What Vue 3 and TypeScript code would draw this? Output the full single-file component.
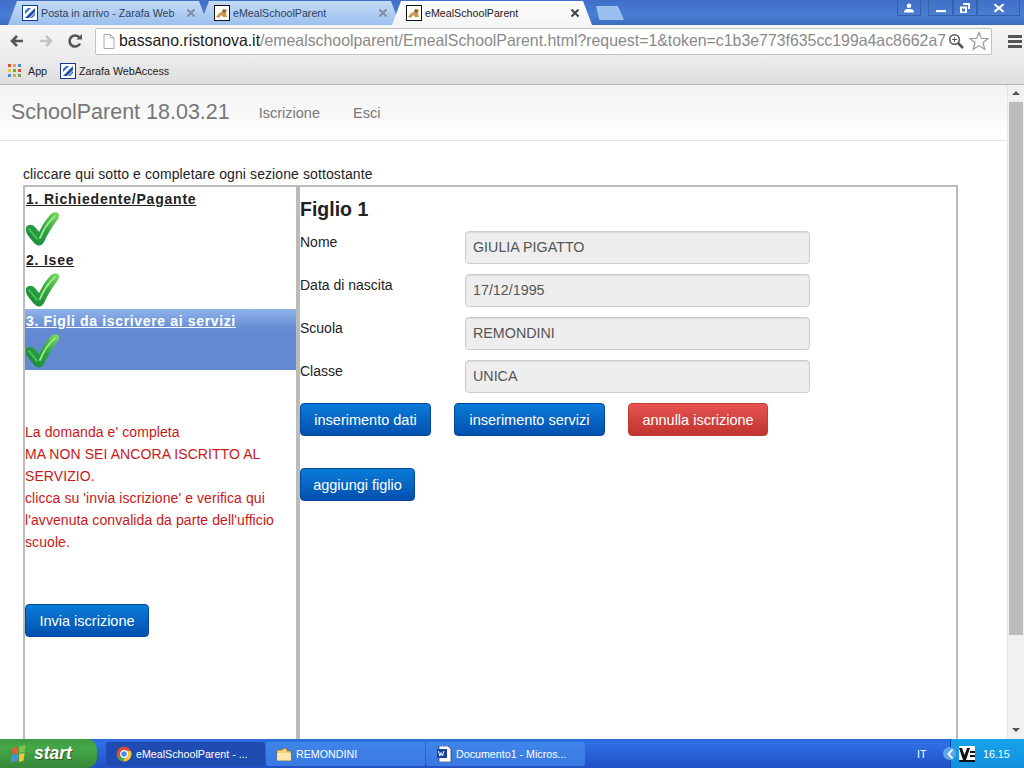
<template>
  <div class="screen">
    <!-- browser chrome -->
    <div class="tabbar">
      <div v-for="tab in tabs" :key="tab.title + tab.icon + tab.active" class="tab" :class="{ active: tab.active }">
        <svg v-if="tab.icon === 'zarafa'" class="fav" viewBox="0 0 16 16"><rect x=".5" y=".5" width="15" height="15" fill="#fff" stroke="#123a8c" /><path d="M3 13 13 3v4L7 13z" fill="#1c4fb0" /><path d="M3 6l3-3h3L3 9zM13 10l-3 3H8l5-5z" fill="#2f6bd0" /></svg>
        <svg v-else class="fav" viewBox="0 0 16 16"><rect x=".5" y=".5" width="15" height="15" fill="#fff" stroke="#111" /><path d="M2 12l3-4 3-1 2-3 3 1-1 3 1 4H9L7 10l-2 3z" fill="#c9994f" /><path d="M9 4l3 1-1 3-3-1z" fill="#8d6a2c" /></svg>
        <span class="tab-title">{{ tab.title }}</span>
        <svg class="tab-x" viewBox="0 0 10 10"><path d="M1.500 1.500l7 7M8.500 1.500l-7 7" /></svg>
      </div>
      <div class="newtab"></div>
      <div class="win-btns">
        <div class="win-btn user"><svg viewBox="0 0 12 10"><circle cx="6" cy="2.800" r="2.300" fill="#fff" /><path d="M1 9.500c0-3 2-3.500 5-3.500s5 .5 5 3.500z" fill="#fff" /></svg></div>
        <div class="win-group">
          <div class="win-btn"><svg viewBox="0 0 12 10"><path d="M1 7h10v2.200H1z" fill="#fff" /></svg></div>
          <div class="win-btn"><svg class="restore" viewBox="0 0 12 12"><path d="M4 1h7v6H9V3H4z M1 4.500h7v6.500H1z M3 6.500v3h3v-3z" fill="#fff" fill-rule="evenodd" /></svg></div>
          <div class="win-btn close"><svg viewBox="0 0 12 10"><path d="M2 .5l4 3 4-3 1.300 1.200L7.800 5l3.500 3.300L10 9.500l-4-3-4 3L.7 8.300 4.200 5 .7 1.700z" fill="#fff" /></svg></div>
        </div>
      </div>
    </div>

    <div class="toolbar">
      <svg class="nav-ic" viewBox="0 0 16 16"><path d="M14 8H4M8 3 3 8l5 5" fill="none" stroke="#555" stroke-width="2.600" /></svg>
      <svg class="nav-ic" viewBox="0 0 16 16"><path d="M2 8h10M8 3l5 5-5 5" fill="none" stroke="#c4c4c4" stroke-width="2.600" /></svg>
      <svg class="nav-ic" viewBox="0 0 16 16"><path d="M13 10.500A5.500 5.500 0 1 1 12.200 4.400" fill="none" stroke="#555" stroke-width="2.600" /><path d="M9.500 6.500H15V1z" fill="#555" /></svg>
      <div class="omnibox">
        <svg class="page-ic" viewBox="0 0 12 15"><path d="M1 .5h6.500l3.500 3.500v10.500H1zM7.500 .5V4H11" fill="#fff" stroke="#aaa" /></svg>
        <span class="url"><span class="host">bassano.ristonova.it</span>/emealschoolparent/EmealSchoolParent.html?request=1&amp;token=c1b3e773f635cc199a4ac8662a7</span>
        <svg class="zoom-ic" viewBox="0 0 16 16"><circle cx="6.500" cy="6.500" r="4.800" fill="none" stroke="#555" stroke-width="1.500" /><path d="M10 10l5 5" stroke="#555" stroke-width="2.500" /><path d="M4 6.500h5M6.500 4v5" stroke="#555" /></svg>
        <svg class="star-ic" viewBox="0 0 20 20"><path d="M10 1.500l2.500 6h6.500l-5 4.200 1.800 6.600-5.800-3.700-5.800 3.700L6 11.700 1 7.500h6.500z" fill="#fff" stroke="#9a9a9a" stroke-width="1.200" /></svg>
      </div>
      <div class="menu-ic"><i></i><i></i><i></i></div>
    </div>

    <div class="bookmarks">
      <div class="apps-ic"><i v-for="c in appColors" :key="c.id" :style="{ background: c.color }"></i></div>
      <span class="bm-label">App</span>
      <svg class="fav bm-fav" viewBox="0 0 16 16"><rect x=".5" y=".5" width="15" height="15" fill="#fff" stroke="#123a8c" /><path d="M3 13 13 3v4L7 13z" fill="#1c4fb0" /><path d="M3 6l3-3h3L3 9zM13 10l-3 3H8l5-5z" fill="#2f6bd0" /></svg>
      <span class="bm-label">Zarafa WebAccess</span>
    </div>

    <!-- page -->
    <div class="viewport">
      <div class="page">
        <nav class="navbar">
          <span class="brand">SchoolParent 18.03.21</span>
          <a class="nav-link first">Iscrizione</a>
          <a class="nav-link">Esci</a>
        </nav>
        <p class="intro">cliccare qui sotto e completare ogni sezione sottostante</p>
        <div class="panel">
          <aside class="steps">
            <div v-for="step in steps" :key="step.title" class="step" :class="{ current: step.current }">
              <span class="step-title">{{ step.title }}</span>
              <svg class="check" viewBox="0 0 36 36">
                <defs>
                  <linearGradient id="checkFill" x1="0" y1="1" x2="1" y2="0">
                    <stop offset="0" stop-color="#14843a" />
                    <stop offset=".55" stop-color="#2fa544" />
                    <stop offset="1" stop-color="#7fdc62" />
                  </linearGradient>
                </defs>
                <path d="M2 19Q1 15 5 14 9 13 12 17L15 21Q21 9 27 3 31 0 34 2 36 4 34 8 26 18 20 31 17 36 13 34 10 33 3 23 2 21 2 19z" fill="url(#checkFill)" />
                <path d="M16 27Q21 14 31 5" fill="none" stroke="#9be882" stroke-width="2" stroke-linecap="round" />
                <path d="M5 18 13 28" fill="none" stroke="#4cc25a" stroke-width="2" stroke-linecap="round" />
              </svg>
            </div>
            <div class="warning">
              La domanda e' completa<br />
              MA NON SEI ANCORA ISCRITTO AL SERVIZIO.<br />
              clicca su 'invia iscrizione' e verifica qui l'avvenuta convalida da parte dell'ufficio scuole.
            </div>
            <button class="btn blue send">Invia iscrizione</button>
          </aside>
          <section class="detail">
            <h2>Figlio 1</h2>
            <div v-for="row in fields" :key="row.label" class="field">
              <label>{{ row.label }}</label>
              <div class="input">{{ row.value }}</div>
            </div>
            <div class="actions">
              <button class="btn blue w131">inserimento dati</button>
              <button class="btn blue w151">inserimento servizi</button>
              <button class="btn red w140">annulla iscrizione</button>
            </div>
            <button class="btn blue add">aggiungi figlio</button>
          </section>
        </div>
      </div>
      <div class="scrollbar">
        <div class="arrow up"></div>
        <div class="thumb"></div>
        <div class="arrow down"></div>
      </div>
    </div>

    <!-- windows taskbar -->
    <div class="taskbar">
      <div class="start">
        <svg class="xp-flag" viewBox="0 0 16 16"><path d="M2 3l5-2v6l-5 1z" fill="#e8583a" /><path d="M8 1l6-1-1 6-5 1z" fill="#7fc24a" /><path d="M1 9l6-1v6l-6 1z" fill="#4a8fe0" /><path d="M8 8l5-1-1 7-4 1z" fill="#f4c53c" /></svg>
        <span>start</span>
      </div>
      <div v-for="task in tasks" :key="task.title" class="task" :class="{ pressed: task.pressed }">
        <svg v-if="task.icon === 'chrome'" class="task-ic" viewBox="0 0 16 16"><circle cx="8" cy="8" r="7.500" fill="#e04a3a" /><path d="M8 8 1.500 11.800A7.500 7.500 0 0 0 8 15.500L11.500 9z" fill="#4aa84a" /><path d="M8 8 8 15.500A7.500 7.500 0 0 0 14.800 5H8z" fill="#f2c63a" /><circle cx="8" cy="8" r="3.400" fill="#4a8fe0" stroke="#fff" stroke-width="1.200" /></svg>
        <svg v-else-if="task.icon === 'folder'" class="task-ic" viewBox="0 0 16 16"><path d="M1 4h5l1-1.500h4V5h4v9.500H1z" fill="#f3d27a" stroke="#8a6a20" stroke-width=".7" /><path d="M1 7h14v7.500H1z" fill="#f9e6a8" /></svg>
        <svg v-else class="task-ic" viewBox="0 0 16 16"><path d="M3 0h9l3 3v13H3z" fill="#fff" stroke="#333" stroke-width=".7" /><path d="M1 3h10v9H1z" fill="#1c3f9a" /><path d="M2.500 5l1.300 5 1.300-3.500L6.500 10 8 5" fill="none" stroke="#fff" stroke-width="1" /></svg>
        <span>{{ task.title }}</span>
      </div>
      <div class="task-spacer"></div>
      <span class="lang">IT</span>
      <div class="tray">
        <span class="tray-arrow">
          <svg viewBox="0 0 8 10"><path d="M6.500 .5 2.500 5l4 4.500" fill="none" stroke="#fff" stroke-width="1.800" /></svg>
        </span>
        <svg class="tray-ic" viewBox="0 0 16 16"><rect width="16" height="16" fill="#fff" /><path d="M0 2l4 12h3L11 2H8L5.500 9 3 2z" fill="#111" /><path d="M11 5h5v2h-5zM11 9h5v2h-5zM0 14h16v2H0z" fill="#111" /></svg>
        <span class="clock">16.15</span>
      </div>
    </div>
  </div>
</template>

<script setup lang="ts">
interface Tab {
  title: string
  icon: string
  active?: boolean
}

const tabs: Tab[] = [
  { title: 'Posta in arrivo - Zarafa Web', icon: 'zarafa' },
  { title: 'eMealSchoolParent', icon: 'meal' },
  { title: 'eMealSchoolParent', icon: 'meal', active: true },
]

const appColors = ['#d9503f', '#e8a33a', '#4a8fe0', '#f2c63a', '#6ab04a', '#d9503f', '#4a8fe0', '#e8a33a', '#6ab04a'].map(
  (color, id) => ({ id, color }),
)

const steps = [
  { title: '1. Richiedente/Pagante', current: false },
  { title: '2. Isee', current: false },
  { title: '3. Figli da iscrivere ai servizi', current: true },
]

const fields = [
  { label: 'Nome', value: 'GIULIA PIGATTO' },
  { label: 'Data di nascita', value: '17/12/1995' },
  { label: 'Scuola', value: 'REMONDINI' },
  { label: 'Classe', value: 'UNICA' },
]

const tasks = [
  { title: 'eMealSchoolParent - ...', icon: 'chrome', pressed: true },
  { title: 'REMONDINI', icon: 'folder', pressed: false },
  { title: 'Documento1 - Micros...', icon: 'word', pressed: false },
]
</script>

<style scoped>
.screen {
  width: 1024px;
  height: 768px;
  overflow: hidden;
  display: flex;
  flex-direction: column;
  font-family: "Liberation Sans", Arial, sans-serif;
  background: #fff;
}

/* tabs */
.tabbar {
  height: 25px;
  flex: none;
  display: flex;
  align-items: flex-end;
  padding-left: 8px;
  background: linear-gradient(#3f6fc6, #4a7dd4 60%, #3b6cc0);
}
.tab {
  width: 200px;
  height: 24px;
  flex: none;
  margin-right: -8px;
  display: flex;
  align-items: center;
  gap: 3px;
  padding: 0 12px 1px 14px;
  box-sizing: border-box;
  clip-path: polygon(0 100%, 9px 0, calc(100% - 9px) 0, 100% 100%);
  background: linear-gradient(#c4daf5, #9cc0ee);
  font-size: 10.700px;
  color: #2b3f5e;
}
.tab.active {
  background: linear-gradient(#fff, #f4f4f4);
  color: #222;
}
.fav {
  width: 16px;
  height: 16px;
  flex: none;
}
.tab-title {
  flex: 1;
  min-width: 0;
  white-space: nowrap;
}
.tab-x {
  width: 10px;
  height: 10px;
  flex: none;
  fill: none;
  stroke: #7f8da3;
  stroke-width: 2;
}
.active .tab-x {
  stroke: #444;
}
.newtab {
  width: 28px;
  height: 14px;
  flex: none;
  margin: 0 0 5px 12px;
  clip-path: polygon(0 0, 78% 0, 100% 100%, 12% 100%);
  background: #9bc0ef;
}
.win-btns {
  margin-left: auto;
  align-self: flex-start;
  display: flex;
  gap: 7px;
  padding-right: 4px;
}
.win-btn {
  height: 16px;
  width: 24px;
  display: flex;
  align-items: center;
  justify-content: center;
  border: 1px solid #3460ac;
  border-top: 0;
  box-sizing: border-box;
}
.win-btn svg {
  width: 12px;
  height: 10px;
}
.win-btn svg.restore {
  height: 12px;
}
.win-group {
  display: flex;
}
.win-group .win-btn:first-child {
  width: 25px;
}
.win-group .win-btn.close {
  width: 43px;
}

/* toolbar */
.toolbar {
  height: 32px;
  flex: none;
  display: flex;
  align-items: center;
  padding-left: 9px;
  gap: 13px;
  background: linear-gradient(#f6f6f6, #ececec);
  box-sizing: border-box;
}
.nav-ic {
  width: 16px;
  height: 16px;
  flex: none;
}
.omnibox {
  width: 897px;
  height: 27px;
  margin-left: -1px;
  display: flex;
  align-items: center;
  box-sizing: border-box;
  padding: 0 2px 0 6px;
  background: #fff;
  border: 1px solid #c2c2c2;
  border-radius: 2px;
}
.page-ic {
  width: 12px;
  height: 15px;
  flex: none;
  margin: 0 4px 0 1px;
}
.url {
  flex: 1;
  min-width: 0;
  white-space: nowrap;
  font-size: 15.860px;
  color: #8a8a8a;
}
.host {
  color: #222;
}
.zoom-ic {
  width: 16px;
  height: 16px;
  flex: none;
  margin: 0 5px 0 2px;
}
.star-ic {
  width: 20px;
  height: 20px;
  flex: none;
}
.menu-ic {
  width: 14px;
  margin-left: 3px;
  display: flex;
  flex-direction: column;
  gap: 2px;
}
.menu-ic i {
  height: 3px;
  background: #555;
}

/* bookmarks */
.bookmarks {
  height: 28px;
  flex: none;
  display: flex;
  align-items: center;
  padding-left: 8px;
  background: linear-gradient(#ececec, #dedede);
  border-bottom: 1px solid #b5b5b5;
  box-sizing: border-box;
  font-size: 10.700px;
  color: #222;
}
.apps-ic {
  width: 13px;
  height: 13px;
  display: grid;
  grid-template-columns: repeat(3, 3px);
  grid-auto-rows: 3px;
  gap: 2px;
  margin-right: 7px;
}
.bm-fav {
  margin: 0 3px 0 13px;
}

/* page */
.viewport {
  flex: 1;
  min-height: 0;
  display: flex;
}
.page {
  flex: 1;
  min-width: 0;
  display: flex;
  flex-direction: column;
}
.navbar {
  height: 56px;
  flex: none;
  box-sizing: border-box;
  display: flex;
  align-items: center;
  padding: 0 0 0 11px;
  background: linear-gradient(#f2f2f2, #fff);
  border-bottom: 1px solid #e2e2e2;
  color: #777;
}
.brand {
  font-size: 21.500px;
  margin-right: 29px;
}
.nav-link {
  font-size: 14.500px;
  margin-right: 33px;
}
.intro {
  margin: 25px 0 3px 23px;
  font-size: 14px;
  line-height: 16px;
  color: #222;
  letter-spacing: 0.1px;
}
.panel {
  flex: 1;
  min-height: 0;
  margin-left: 23px;
  width: 935px;
  box-sizing: border-box;
  display: flex;
  border: 2px solid #bbb;
  border-bottom: 0;
}
.steps {
  width: 275px;
  flex: none;
  box-sizing: border-box;
  border-right: 4px solid #bbb;
}
.step {
  height: 61px;
  padding: 3px 0 0 1px;
  box-sizing: border-box;
  color: #222;
}
.step.current {
  background: linear-gradient(#8fb3ea, #6289d2 35%);
  color: #fff;
}
.step-title {
  display: block;
  font-size: 14px;
  line-height: 18px;
  font-weight: bold;
  text-decoration: underline;
  letter-spacing: 0.78px;
}
.step.current .step-title {
  letter-spacing: 0.65px;
}
.check {
  display: block;
  width: 36px;
  height: 36px;
  margin: 3px 0 0 -2px;
}
.warning {
  margin-top: 51px;
  font-size: 14px;
  line-height: 22px;
  letter-spacing: 0.08px;
  color: #c81818;
}
.send {
  width: 124px;
  margin-top: 51px;
}
.btn {
  display: block;
  height: 33px;
  padding: 0;
  border: 1px solid #04459c;
  border-radius: 4px;
  font: 14.500px "Liberation Sans", Arial, sans-serif;
  color: #fff;
  text-align: center;
}
.blue {
  background: linear-gradient(#0a7bd8, #0350ae);
}
.red {
  background: linear-gradient(#e5534f, #c13430);
  border-color: #c23a36;
}
.w131 {
  width: 131px;
}
.w151 {
  width: 151px;
}
.w140 {
  width: 140px;
}
.add {
  width: 115px;
  margin-top: 32px;
}
.detail {
  flex: 1;
  min-width: 0;
  box-sizing: border-box;
}
h2 {
  margin: 10px 0 10px;
  font-size: 19.500px;
  line-height: 24px;
  color: #222;
}
.field {
  display: flex;
  height: 33px;
  margin-bottom: 10px;
  font-size: 14px;
  color: #222;
}
.field label {
  width: 165px;
  padding-top: 3px;
  line-height: 16px;
}
.input {
  width: 345px;
  height: 33px;
  box-sizing: border-box;
  padding: 0 7px;
  line-height: 31px;
  background: #eee;
  border: 1px solid #ccc;
  border-radius: 4px;
  box-shadow: inset 0 1px 1px rgba(0, 0, 0, 0.08);
  font-size: 14.300px;
  color: #555;
}
.actions {
  display: flex;
  gap: 23px;
}

/* scrollbar */
.scrollbar {
  width: 17px;
  flex: none;
  display: flex;
  flex-direction: column;
  background: #f1f1f1;
  border-left: 1px solid #e6e6e6;
  box-sizing: border-box;
}
.thumb {
  height: 533px;
  margin: 0 1px;
  background: #bcbcbc;
}
.arrow {
  height: 17px;
  flex: none;
  position: relative;
}
.arrow.down {
  margin-top: auto;
}
.arrow::after {
  content: "";
  position: absolute;
  left: 4px;
  top: 6px;
  border: 4px solid transparent;
}
.arrow.up::after {
  top: 2px;
  border-bottom-color: #555;
}
.arrow.down::after {
  border-top-color: #555;
}

/* taskbar */
.taskbar {
  height: 29px;
  flex: none;
  display: flex;
  align-items: center;
  background: linear-gradient(#2a6ad8, #2f70e6 12%, #2a61d6 55%, #2050c4);
  font-size: 10.700px;
  color: #fff;
}
.start {
  width: 97px;
  height: 29px;
  flex: none;
  box-sizing: border-box;
  margin-right: 9px;
  display: flex;
  align-items: center;
  gap: 6px;
  padding-left: 10px;
  background: linear-gradient(#3d9a40, #45a848 30%, #37883a);
  border-radius: 0 10px 10px 0;
  font-size: 17.500px;
  font-style: italic;
  font-weight: bold;
  text-shadow: 1px 1px 1px rgba(0, 0, 0, 0.4);
}
.xp-flag {
  width: 18px;
  height: 18px;
}
.task {
  width: 159px;
  height: 24px;
  flex: none;
  margin-right: 1px;
  box-sizing: border-box;
  padding-left: 10px;
  display: flex;
  align-items: center;
  gap: 4px;
  background: linear-gradient(#3f85ea, #3a78e2);
  border-radius: 2px;
  white-space: nowrap;
}
.task.pressed {
  background: #1f4cb0;
}
.task-ic {
  width: 16px;
  height: 16px;
  flex: none;
}
.task-spacer {
  flex: 1;
}
.lang {
  width: 33px;
}
.tray {
  width: 74px;
  height: 29px;
  display: flex;
  align-items: center;
  box-sizing: border-box;
  background: linear-gradient(#16a3ea, #1290e0);
  border-left: 1px solid #0b3fa8;
  position: relative;
}
.tray-arrow {
  position: absolute;
  left: -8px;
  top: 8px;
  width: 13px;
  height: 13px;
  display: flex;
  align-items: center;
  justify-content: center;
  border-radius: 50%;
  background: #5da6ee;
}
.tray-arrow svg {
  width: 8px;
  height: 10px;
}
.tray-ic {
  width: 16px;
  height: 16px;
  margin-left: 8px;
}
.clock {
  margin-left: 8px;
}
</style>
